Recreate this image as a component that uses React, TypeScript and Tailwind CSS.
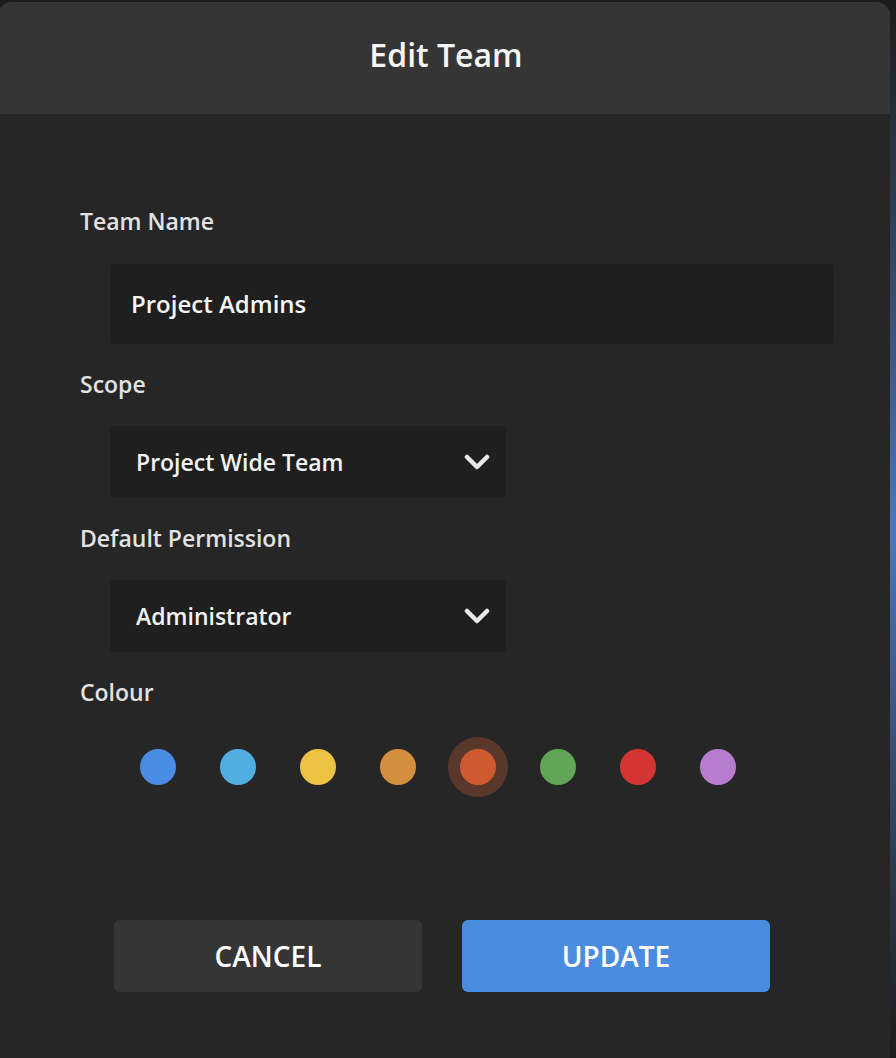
import React, { useState } from 'react';

const COLOURS = ['#4a8ce3', '#50aee0', '#ecc244', '#d48f3e', '#d05a30', '#63a557', '#d33532', '#b87ccf'];

const Chevron = () => (
  <svg width="26" height="18" viewBox="0 0 26 18" fill="none">
    <path d="M3 4 L13 14 L23 4" stroke="#e8e8e8" strokeWidth="4.5" strokeLinecap="round" strokeLinejoin="round" />
  </svg>
);

const Label = ({ children }: { children: React.ReactNode }) => (
  <div className="h-[30px] flex items-center text-[23px] font-semibold text-[#e2e2e2]">{children}</div>
);

const Select = ({ value }: { value: string }) => (
  <div className="ml-[30px] w-[396px] h-[72px] rounded-[4px] bg-[#1f1f1f] flex items-center justify-between pl-[26px] pr-[16px]">
    <span className="text-[23px] font-semibold text-[#f2f2f2]">{value}</span>
    <Chevron />
  </div>
);

export default function App() {
  const [selected, setSelected] = useState(4);

  return (
    <div className="w-[896px] h-[1058px] bg-[#1c1c1c] overflow-hidden flex" style={{ fontFamily: '"Open Sans", "Noto Sans", sans-serif' }}>
      <div className="w-[892px] mt-[2px] -ml-[2px] rounded-t-[14px] overflow-hidden bg-[#262626] flex flex-col">
        <div className="h-[112px] bg-[#353535] flex items-center justify-center pl-[4px] pb-[6px]">
          <h1 className="text-[32px] font-semibold text-[#f5f5f5]">Edit Team</h1>
        </div>

        <div className="pl-[82px] pr-[56px] pt-[92px] flex flex-col">
          <Label>Team Name</Label>
          <div className="mt-[28px] ml-[30px] h-[80px] rounded-[4px] bg-[#1f1f1f] flex items-center pl-[21px]">
            <span className="text-[24px] font-semibold text-[#f5f5f5]">Project Admins</span>
          </div>

          <div className="mt-[25px]"><Label>Scope</Label></div>
          <div className="mt-[27px]"><Select value="Project Wide Team" /></div>

          <div className="mt-[25px]"><Label>Default Permission</Label></div>
          <div className="mt-[27px]"><Select value="Administrator" /></div>

          <div className="mt-[25px]"><Label>Colour</Label></div>
          <div className="mt-[30px] ml-[48px] flex">
            {COLOURS.map((c, i) => (
              <button
                key={c}
                onClick={() => setSelected(i)}
                className={`w-[60px] h-[60px] mr-[20px] rounded-full flex items-center justify-center ${i === selected ? 'bg-[#5a372b]' : ''}`}
              >
                <span className="w-[36px] h-[36px] rounded-full" style={{ backgroundColor: c }} />
              </button>
            ))}
          </div>

          <div className="mt-[123px] ml-[34px] flex gap-[40px]">
            <button className="w-[308px] h-[72px] rounded-[6px] bg-[#353535] text-white text-[28px] font-semibold">CANCEL</button>
            <button className="w-[308px] h-[72px] rounded-[6px] bg-[#4a8ce0] text-white text-[28px] font-semibold">UPDATE</button>
          </div>
        </div>
      </div>
      <div className="flex-1 mt-[2px] bg-gradient-to-b from-[#1c1c1c] via-[#4a78c0] to-[#1c1c1c]" />
    </div>
  );
}
